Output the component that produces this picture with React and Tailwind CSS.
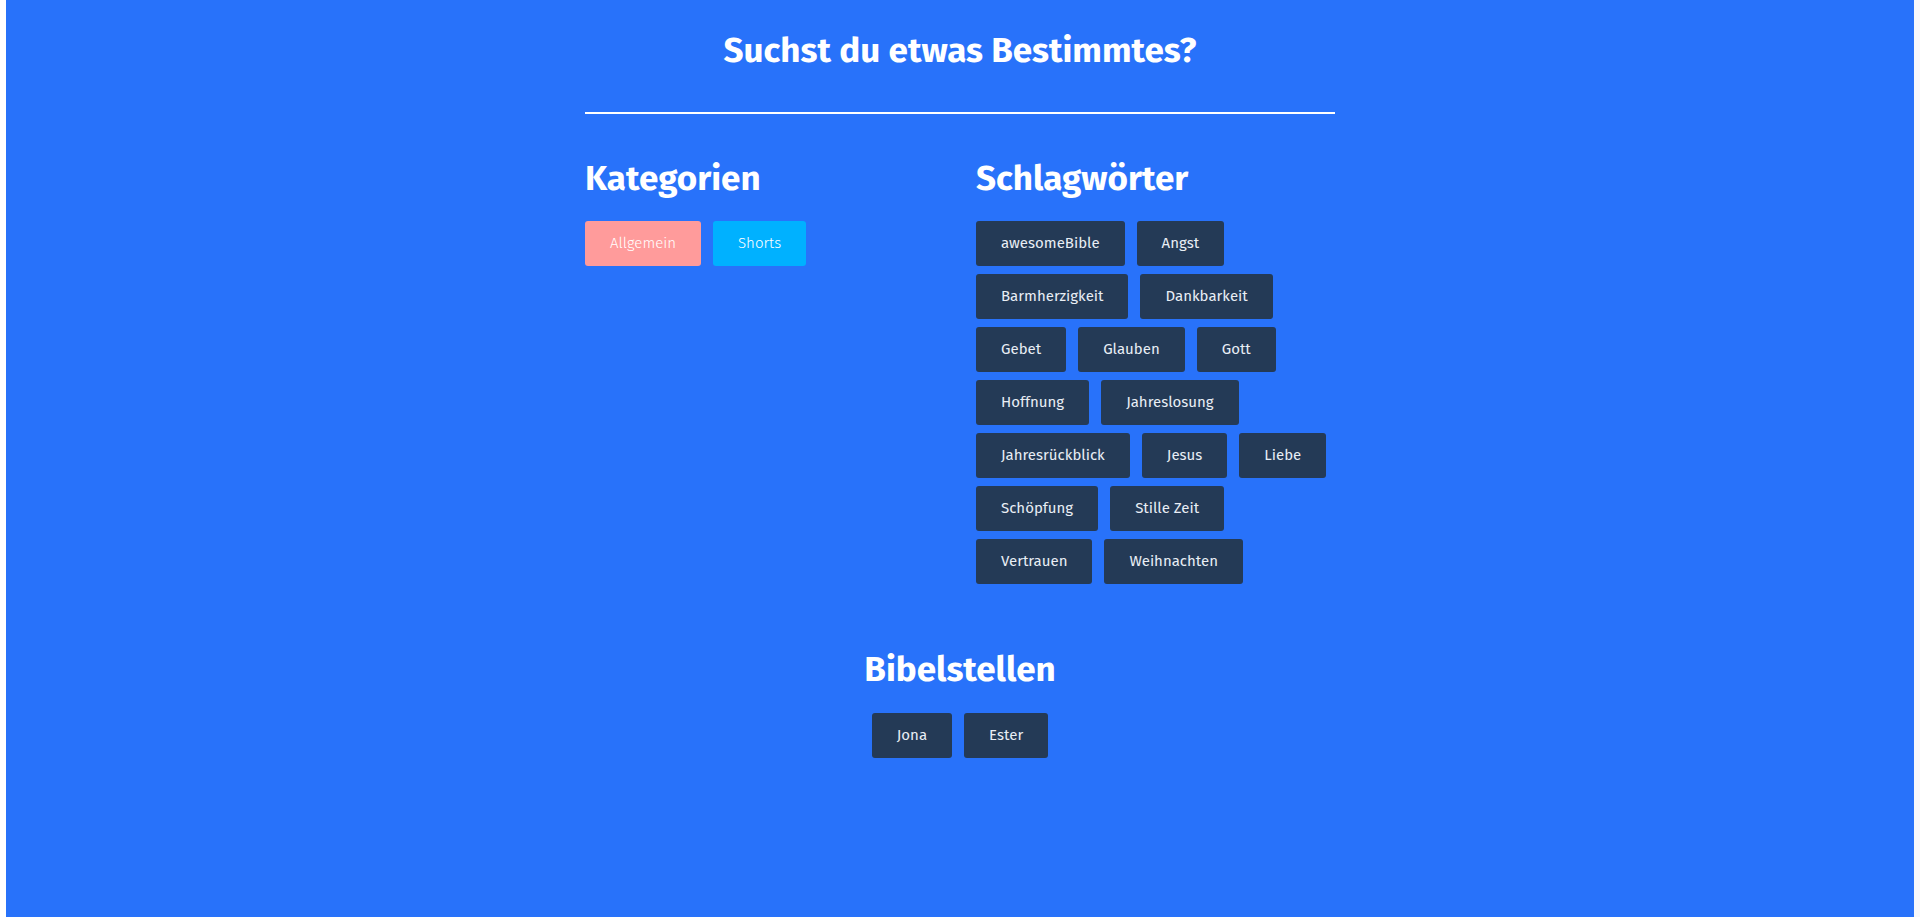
const categories = [
  { name: 'Allgemein', color: 'bg-[#ff9b9b]' },
  { name: 'Shorts', color: 'bg-[#00b1ff]' },
];

const tags = [
  'awesomeBible', 'Angst', 'Barmherzigkeit', 'Dankbarkeit', 'Gebet', 'Glauben', 'Gott',
  'Hoffnung', 'Jahreslosung', 'Jahresrückblick', 'Jesus', 'Liebe', 'Schöpfung',
  'Stille Zeit', 'Vertrauen', 'Weihnachten',
];

const books = ['Jona', 'Ester'];

function Tag({ label, className = 'bg-[#243a56] text-[#e9eef5]' }) {
  return (
    <a href="#" className={`h-[45px] px-[25px] rounded-[3px] flex items-center text-[15px] ${className}`}>
      {label}
    </a>
  );
}

export default function App() {
  return (
    <div className="flex min-h-screen h-[917px]" style={{ fontFamily: '"Fira Sans", Roboto, sans-serif' }}>
      <div className="w-[6px] bg-white" />
      <main className="flex-1 bg-[#2872fa] text-white">
        <div className="w-[750px] mx-auto pt-[26px]">
          <h1 className="text-[35px] font-bold leading-[48px] text-center">Suchst du etwas Bestimmtes?</h1>
          <hr className="mt-[38px] border-0 h-[2px] bg-white" />

          <div className="flex mt-[40px]">
            <section className="w-[391px]">
              <h2 className="text-[35px] font-bold leading-[48px]">Kategorien</h2>
              <div className="flex gap-[12px] mt-[19px]">
                {categories.map(c => (
                  <Tag key={c.name} label={c.name} className={`${c.color} text-white font-light`} />
                ))}
              </div>
            </section>
            <section className="w-[359px]">
              <h2 className="text-[35px] font-bold leading-[48px]">Schlagwörter</h2>
              <div className="flex flex-wrap gap-x-[12px] gap-y-[8px] mt-[19px]">
                {tags.map(t => <Tag key={t} label={t} />)}
              </div>
            </section>
          </div>

          <section className="mt-[61px] flex flex-col items-center">
            <h2 className="text-[35px] font-bold leading-[48px]">Bibelstellen</h2>
            <div className="flex gap-[12px] mt-[20px]">
              {books.map(b => <Tag key={b} label={b} />)}
            </div>
          </section>
        </div>
      </main>
      <div className="w-[6px] bg-[#f7f8fa]" />
    </div>
  );
}
